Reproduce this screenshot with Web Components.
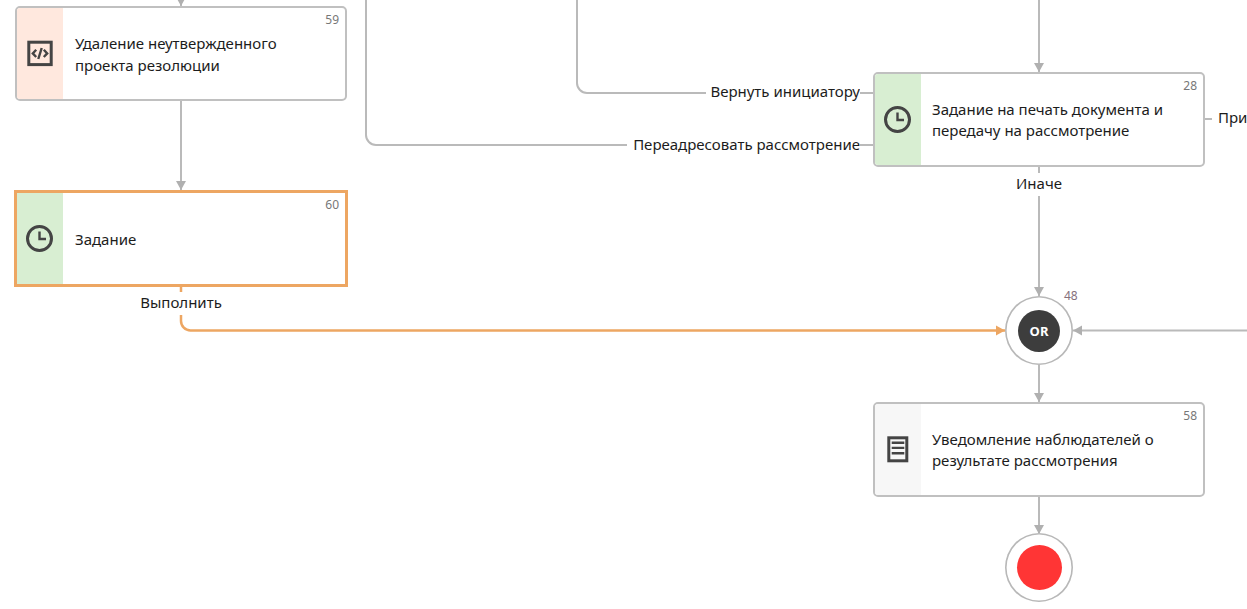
<!DOCTYPE html>
<html lang="ru">
<head>
<meta charset="utf-8">
<title>Маршрут</title>
<style>
  html, body { margin: 0; height: 100%; background: #fff; overflow: hidden; }
</style>
</head>
<body>
<flow-canvas>
  <flow-node x="15" y="6" w="332" h="95" pad="12" lh="22" num="59" icon="code" tint="#ffe8de">Удаление неутвержденного проекта резолюции</flow-node>
  <flow-node x="14" y="190" w="334" h="97" pad="12" lh="22" num="60" icon="clock" tint="#d8eed2" selected>Задание</flow-node>
  <flow-node x="873" y="72" w="332" h="95" pad="11" lh="21" num="28" icon="clock" tint="#d8eed2">Задание на печать документа и передачу на рассмотрение</flow-node>
  <flow-node x="873" y="402" w="332" h="95" pad="11" lh="21" num="58" icon="doc" tint="#f7f7f7">Уведомление наблюдателей о результате рассмотрения</flow-node>

  <flow-gate x="1005" y="296" num="48" kind="or"></flow-gate>
  <flow-gate x="1005" y="533" kind="end"></flow-gate>

  <flow-label x="706" y="81" w="154" align="right">Вернуть инициатору</flow-label>
  <flow-label x="627" y="134" w="233" align="right">Переадресовать рассмотрение</flow-label>
  <flow-label x="1212" y="107" w="35" align="left">При</flow-label>
  <flow-label x="1009" y="173" w="60" align="center">Иначе</flow-label>
  <flow-label x="131" y="292" w="100" align="center">Выполнить</flow-label>
</flow-canvas>

<script>
const ICONS = {
  clock: `<circle cx="22.500" cy="45.500" r="12" fill="none" stroke="#444" stroke-width="3"/>
          <path d="M22.500 38.500v7.500h6.500" fill="none" stroke="#444" stroke-width="2.400"/>`,
  code: `<rect x="11.800" y="34.200" width="22.400" height="22.400" fill="none" stroke="#444" stroke-width="3"/>
         <path d="M19.200 41.800l-3.400 3.600 3.400 3.600M26.800 41.800l3.400 3.600-3.400 3.600" fill="none" stroke="#444" stroke-width="2.400"/>
         <path d="M24.700 40l-3.400 11" fill="none" stroke="#444" stroke-width="2.400"/>`,
  doc: `<rect x="13.800" y="33.800" width="18" height="23" fill="none" stroke="#444" stroke-width="3"/>
        <path d="M16.700 38.700h12.600M16.700 43.900h12.600M16.700 49.300h12.600" fill="none" stroke="#444" stroke-width="2.400"/>`
};

class FlowCanvas extends HTMLElement {
  constructor() {
    super();
    this.attachShadow({ mode: 'open' });
  }
  connectedCallback() {
    this.shadowRoot.innerHTML = `
      <style>
        :host {
          display: block;
          position: relative;
          width: 1247px;
          height: 609px;
          overflow: hidden;
          background: #fff;
          font-family: "Noto Sans", "Open Sans", sans-serif;
          color: #1c1c1c;
        }
        svg { position: absolute; left: 0; top: 0; }
        .edge { fill: none; stroke: #bababa; stroke-width: 2; }
        .head { fill: #b0b0b0; }
        .hot { fill: none; stroke: #eda662; stroke-width: 2.500; }
        .hot-head { fill: #eda662; }
      </style>
      <svg width="1247" height="609" viewBox="0 0 1247 609">
        <path class="edge" d="M181 0V6M181 100V190"/>
        <path class="head" d="M176 -3h10l-5 9zM176 181h10l-5 9z"/>
        <path class="edge" d="M1039 0V72M1039 166V296M1039 364V402M1039 496V534"/>
        <path class="head" d="M1034 63h10l-5 9zM1034 287h10l-5 9zM1034 393h10l-5 9zM1034 525h10l-5 9z"/>
        <path class="edge" d="M577 0V83a10 10 0 0 0 10 10H873"/>
        <path class="edge" d="M366 0V135a10 10 0 0 0 10 10H873"/>
        <path class="edge" d="M1205 119H1212"/>
        <path class="edge" d="M1247 330.500H1073"/>
        <path class="head" d="M1073 330.500l9-5v10z"/>
        <path class="hot" d="M181 287V321a9.500 9.500 0 0 0 9.500 9.500H1005"/>
        <path class="hot-head" d="M1005 330.500l-9-5v10z"/>
      </svg>
      <slot></slot>
    `;
  }
}

class FlowNode extends HTMLElement {
  constructor() {
    super();
    this.attachShadow({ mode: 'open' });
  }
  connectedCallback() {
    const a = (n) => this.getAttribute(n);
    this.shadowRoot.innerHTML = `
      <style>
        :host {
          display: flex;
          position: absolute;
          box-sizing: border-box;
          left: ${a('x')}px;
          top: ${a('y')}px;
          width: ${a('w')}px;
          height: ${a('h')}px;
          background: #fff;
          border: 2px solid #c0c0c0;
          border-radius: 5px;
          overflow: hidden;
        }
        :host([selected]) {
          border: 3px solid #eda662;
          border-radius: 0;
        }
        .side {
          flex: none;
          width: 46px;
          background: ${a('tint')};
        }
        .side svg { display: block; }
        .text {
          flex: 1;
          align-self: center;
          margin-top: ${a('lh') === '21' ? 0 : 1}px;
          padding: 0 24px 0 ${a('pad')}px;
          font-size: 15px;
          line-height: ${a('lh')}px;
        }
        .num {
          position: absolute;
          right: 6px;
          top: 4px;
          font-size: 12px;
          line-height: 16px;
          color: #777;
        }
      </style>
      <div class="side">
        <svg width="46" height="92" viewBox="0 0 46 92">${ICONS[a('icon')]}</svg>
      </div>
      <div class="text"><slot></slot></div>
      <div class="num">${a('num')}</div>
    `;
  }
}

class FlowGate extends HTMLElement {
  constructor() {
    super();
    this.attachShadow({ mode: 'open' });
  }
  connectedCallback() {
    const num = this.getAttribute('num');
    const kind = this.getAttribute('kind');
    this.shadowRoot.innerHTML = `
      <style>
        :host {
          display: flex;
          position: absolute;
          box-sizing: border-box;
          align-items: center;
          justify-content: center;
          left: ${this.getAttribute('x')}px;
          top: ${this.getAttribute('y')}px;
          width: 68px;
          height: 69px;
          background: #fff;
          box-shadow: inset 0 0 0 1.600px #b8b8b8;
          border-radius: 50%;
        }
        .or {
          width: 42px;
          height: 42px;
          border-radius: 50%;
          background: #3d3d3d;
          color: #fff;
          font-size: 13px;
          font-weight: 700;
          line-height: 42px;
          text-align: center;
        }
        .end {
          width: 45px;
          height: 45px;
          border-radius: 50%;
          background: #ff3535;
        }
        .num {
          position: absolute;
          left: 59px;
          top: -8px;
          font-size: 12px;
          line-height: 16px;
          color: #85707c;
        }
      </style>
      ${kind === 'or' ? '<div class="or">OR</div>' : '<div class="end"></div>'}
      ${num ? `<div class="num">${num}</div>` : ''}
    `;
  }
}

class FlowLabel extends HTMLElement {
  constructor() {
    super();
    this.attachShadow({ mode: 'open' });
  }
  connectedCallback() {
    this.shadowRoot.innerHTML = `
      <style>
        :host {
          display: block;
          position: absolute;
          box-sizing: border-box;
          left: ${this.getAttribute('x')}px;
          top: ${this.getAttribute('y')}px;
          width: ${this.getAttribute('w')}px;
          height: 23px;
          padding: 0 0 0 ${this.getAttribute('align') === 'left' ? 6 : 0}px;
          background: #fff;
          font-size: 15px;
          line-height: 21px;
          white-space: nowrap;
          overflow: hidden;
          text-align: ${this.getAttribute('align')};
        }
      </style>
      <slot></slot>
    `;
  }
}

customElements.define('flow-canvas', FlowCanvas);
customElements.define('flow-node', FlowNode);
customElements.define('flow-gate', FlowGate);
customElements.define('flow-label', FlowLabel);
</script>
</body>
</html>
